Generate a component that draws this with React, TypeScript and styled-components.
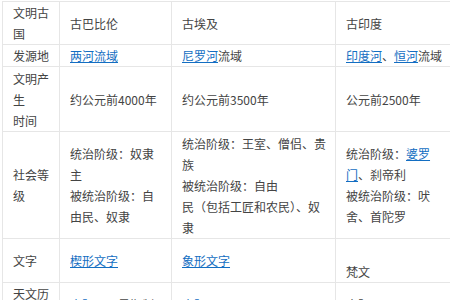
import React from "react";
import styled, { createGlobalStyle } from "styled-components";

const Global = createGlobalStyle`
  html, body { margin: 0; padding: 0; background: #fff; overflow: hidden; }
  body { font-family: "Noto Sans CJK SC", "Noto Sans", sans-serif; }
`;

const Wrap = styled.div`
  padding: 1px 0 0 2px;
`;

const Table = styled.table`
  border-collapse: collapse;
  table-layout: fixed;
  width: 454px;
  font-size: 12px;
  line-height: 21px;
  color: #444;
`;

const Cell = styled.td`
  border: 1px solid #e6e6e6;
  padding: 0 9px 0 10px;
  vertical-align: middle;
  word-break: break-all;
`;

const Link = styled.a`
  color: #136ec2;
  text-decoration: underline;
  cursor: pointer;
`;

const Keep = styled.span`
  white-space: nowrap;
`;

const widths = [57, 112, 164, 121];

type Row = { h?: number; cells: React.ReactNode[] };

const rows: Row[] = [
  { h: 43, cells: ["文明古国", "古巴比伦", "古埃及", "古印度"] },
  {
    h: 22,
    cells: [
      "发源地",
      <Link>两河流域</Link>,
      <>
        <Link>尼罗河</Link>流域
      </>,
      <>
        <Link>印度河</Link>、<Link>恒河</Link>流域
      </>,
    ],
  },
  {
    h: 65,
    cells: [
      <>
        文明产生
        <br />
        时间
      </>,
      "约公元前4000年",
      "约公元前3500年",
      "公元前2500年",
    ],
  },
  {
    h: 107,
    cells: [
      "社会等级",
      <>
        统治阶级：奴隶主
        <br />
        被统治阶级：自由民、奴隶
      </>,
      <>
        统治阶级：王室、僧侣、贵族
        <br />
        被统治阶级：自由<Keep>民（包括工匠和农民）</Keep>、奴隶
      </>,
      <>
        统治阶级：<Link>婆罗<br />门</Link>、刹帝利
        <br />
        被统治阶级：吠舍、首陀罗
      </>,
    ],
  },
  {
    h: 44,
    cells: [
      "文字",
      <Link>楔形文字</Link>,
      <Link>象形文字</Link>,
      <>
        <br />
        梵文
      </>,
    ],
  },
  {
    cells: [
      "天文历法",
      <>
        <Link>太阳历</Link>、星期制
      </>,
      <Link>太阳历</Link>,
      "太阳历",
    ],
  },
];

export default function App() {
  return (
    <>
      <Global />
      <Wrap>
        <Table>
          <colgroup>
            {widths.map((w, i) => (
              <col key={i} style={{ width: w }} />
            ))}
          </colgroup>
          <tbody>
            {rows.map((r, i) => (
              <tr key={i} style={r.h ? { height: r.h } : undefined}>
                {r.cells.map((c, j) => (
                  <Cell key={j}>{c}</Cell>
                ))}
              </tr>
            ))}
          </tbody>
        </Table>
      </Wrap>
    </>
  );
}
